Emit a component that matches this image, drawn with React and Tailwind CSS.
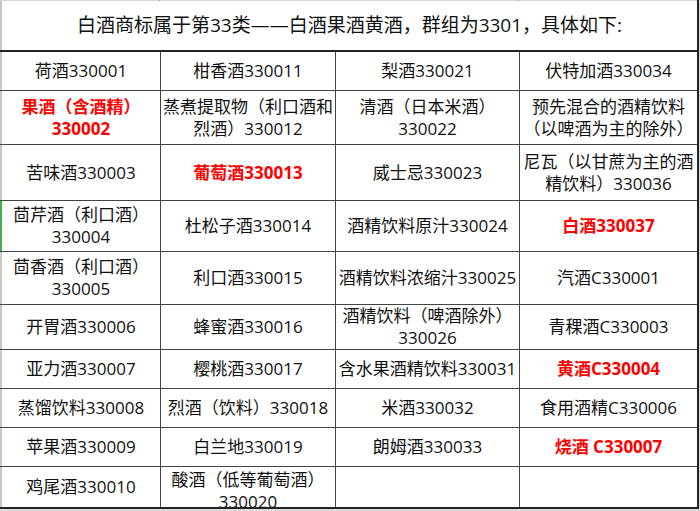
const rows = [
  { h: 'h-[39px]', cells: [{ t: ['荷酒330001'] }, { t: ['柑香酒330011'] }, { t: ['梨酒330021'] }, { t: ['伏特加酒330034'] }] },
  {
    h: 'h-[54px]',
    cells: [
      { t: ['果酒（含酒精）', '330002'], red: true },
      { t: ['蒸煮提取物（利口酒和', '烈酒）330012'] },
      { t: ['清酒（日本米酒）', '330022'] },
      { t: ['预先混合的酒精饮料', '（以啤酒为主的除外）'] },
    ],
  },
  {
    h: 'h-[56px]',
    cells: [
      { t: ['苦味酒330003'] },
      { t: ['葡萄酒330013'], red: true },
      { t: ['威士忌330023'] },
      { t: ['尼瓦（以甘蔗为主的酒', '精饮料）330036'] },
    ],
  },
  {
    h: 'h-[51px]',
    mark: true,
    cells: [
      { t: ['茴芹酒（利口酒）', '330004'] },
      { t: ['杜松子酒330014'] },
      { t: ['酒精饮料原汁330024'] },
      { t: ['白酒330037'], red: true },
    ],
  },
  {
    h: 'h-[53px]',
    cells: [
      { t: ['茴香酒（利口酒）', '330005'] },
      { t: ['利口酒330015'] },
      { t: ['酒精饮料浓缩汁330025'] },
      { t: ['汽酒C330001'] },
    ],
  },
  {
    h: 'h-[45px]',
    cells: [
      { t: ['开胃酒330006'] },
      { t: ['蜂蜜酒330016'] },
      { t: ['酒精饮料（啤酒除外）', '330026'] },
      { t: ['青稞酒C330003'] },
    ],
  },
  {
    h: 'h-[39px]',
    cells: [
      { t: ['亚力酒330007'] },
      { t: ['樱桃酒330017'] },
      { t: ['含水果酒精饮料330031'] },
      { t: ['黄酒C330004'], red: true },
    ],
  },
  {
    h: 'h-[39px]',
    cells: [{ t: ['蒸馏饮料330008'] }, { t: ['烈酒（饮料）330018'] }, { t: ['米酒330032'] }, { t: ['食用酒精C330006'] }],
  },
  {
    h: 'h-[39px]',
    cells: [{ t: ['苹果酒330009'] }, { t: ['白兰地330019'] }, { t: ['朗姆酒330033'] }, { t: ['烧酒 C330007'], red: true }],
  },
  {
    h: 'h-[42px]',
    last: true,
    cells: [{ t: ['鸡尾酒330010'] }, { t: ['酸酒（低等葡萄酒）', '330020'], low: true }, { t: [] }, { t: [] }],
  },
];

const widths = ['w-[159px] border-r', 'w-[175px] border-r', 'w-[184px] border-r', 'w-[177px]'];

const Cell = ({ cell, w }) => (
  <div
    className={`${w} border-[#444] h-full overflow-hidden flex flex-col items-center justify-center leading-[22px] ${
      cell.low ? 'pt-2' : ''
    } ${cell.red ? 'text-[#ff0000] font-bold' : 'text-[#111]'}`}
  >
    {cell.t.map((line) => (
      <span key={line} className="whitespace-nowrap">
        {line}
      </span>
    ))}
  </div>
);

export default function App() {
  return (
    <div className="w-[700px] h-[511px] overflow-hidden bg-[#dcdcdc] font-['Open_Sans','Noto_Sans_CJK_SC',sans-serif] text-[17px]">
      <div className="w-[699px] bg-white border-r-2 border-[#222]">
        {/* strip of the sheet row above */}
        <div className="flex h-px bg-[#d4d4d4]">
          <div className="w-[160px] border-r border-[#999]" />
          <div className="w-[359px] border-r border-[#999]" />
        </div>

        <div className="flex h-[51px] border-b-2 border-[#222]">
          <div className="w-[2px] bg-[#c8c8c8]" />
          <div className="flex-1 flex items-center justify-center text-[19px] text-[#111]">
            白酒商标属于第33类——白酒果酒黄酒，群组为3301，具体如下:
          </div>
        </div>

        {rows.map((row, i) => (
          <div
            key={i}
            className={`flex ${row.h} ${row.last ? 'border-b-2 border-[#222]' : 'border-b border-[#444]'}`}
          >
            <div className={`w-[2px] ${row.mark ? 'bg-[#3fb34f]' : 'bg-[#c8c8c8]'}`} />
            {row.cells.map((cell, j) => (
              <Cell key={j} cell={cell} w={widths[j]} />
            ))}
          </div>
        ))}
      </div>
    </div>
  );
}
